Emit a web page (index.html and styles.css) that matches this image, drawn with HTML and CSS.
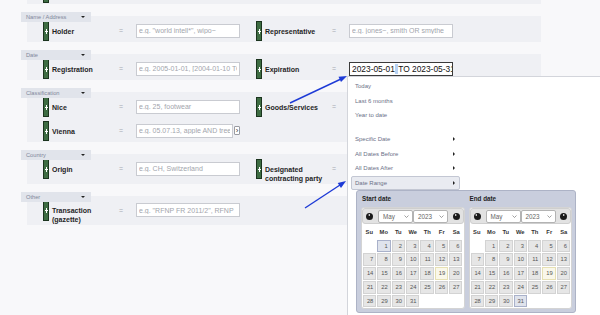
FILE: index.html
```html
<!DOCTYPE html>
<html lang="en">
<head>
    <meta charset="UTF-8">
    <title>Search form</title>
    <link rel="stylesheet" href="styles.css">
</head>
<body>
    <div class="form">
        <!-- previous row, scrolled off the top -->
        <div class="band band-top">
            <div class="row">
                <div class="field"><span class="grip"></span></div>
            </div>
        </div>

        <section class="group">
            <div class="legend">Name / Address<span class="caret"></span></div>
            <div class="band">
                <div class="row">
                    <div class="field">
                        <span class="grip"></span><span class="label">Holder</span><span class="eq">=</span>
                        <input class="box" type="text" placeholder='e.g. "world intell*", wipo~'>
                    </div>
                    <div class="field">
                        <span class="grip"></span><span class="label">Representative</span><span class="eq">=</span>
                        <input class="box" type="text" placeholder="e.g. jones~, smith OR smythe">
                    </div>
                </div>
            </div>
        </section>

        <section class="group">
            <div class="legend">Date<span class="caret"></span></div>
            <div class="band">
                <div class="row">
                    <div class="field">
                        <span class="grip"></span><span class="label">Registration</span><span class="eq">=</span>
                        <input class="box" type="text" placeholder="e.g. 2005-01-01, [2004-01-10 TO 2005-01-01]">
                    </div>
                    <div class="field">
                        <span class="grip"></span><span class="label">Expiration</span><span class="eq">=</span>
                        <div class="box box-focus">2023-05-01<span class="caret-sel"> </span>TO 2023-05-31</div>
                    </div>
                </div>
            </div>
        </section>

        <section class="group">
            <div class="legend">Classification<span class="caret"></span></div>
            <div class="band">
                <div class="row">
                    <div class="field">
                        <span class="grip"></span><span class="label">Nice</span><span class="eq">=</span>
                        <input class="box" type="text" placeholder="e.g. 25, footwear">
                    </div>
                    <div class="field">
                        <span class="grip"></span><span class="label">Goods/Services</span><span class="eq">=</span>
                        <input class="box" type="text" placeholder="">
                    </div>
                </div>
                <div class="row">
                    <div class="field">
                        <span class="grip"></span><span class="label">Vienna</span><span class="eq">=</span>
                        <div class="box-wrap">
                            <input class="box box-short" type="text" placeholder="e.g. 05.07.13, apple AND tree">
                            <button class="pick">&rsaquo;</button>
                        </div>
                    </div>
                </div>
            </div>
        </section>

        <section class="group">
            <div class="legend">Country<span class="caret"></span></div>
            <div class="band">
                <div class="row">
                    <div class="field">
                        <span class="grip"></span><span class="label">Origin</span><span class="eq">=</span>
                        <input class="box" type="text" placeholder="e.g. CH, Switzerland">
                    </div>
                    <div class="field">
                        <span class="grip"></span><span class="label">Designated contracting party</span><span class="eq">=</span>
                    </div>
                </div>
            </div>
        </section>

        <section class="group">
            <div class="legend">Other<span class="caret"></span></div>
            <div class="band">
                <div class="row">
                    <div class="field">
                        <span class="grip"></span><span class="label">Transaction (gazette)</span><span class="eq">=</span>
                        <input class="box" type="text" placeholder='e.g. "RFNP FR 2011/2", RFNP'>
                    </div>
                </div>
            </div>
        </section>
    </div>

    <!-- date menu opened under Expiration -->
    <div class="date-menu">
        <div class="menu-item">Today</div>
        <div class="menu-item">Last 6 months</div>
        <div class="menu-item">Year to date</div>
        <div class="menu-item menu-sep has-sub">Specific Date<span class="tri"></span></div>
        <div class="menu-item has-sub">All Dates Before<span class="tri"></span></div>
        <div class="menu-item has-sub">All Dates After<span class="tri"></span></div>
        <div class="menu-item has-sub active">Date Range<span class="tri"></span></div>

        <div class="range-panel">
            <div class="range-col">
                <div class="range-title">Start date</div>
                <div class="cal">
                    <div class="cal-head">
                        <span class="nav nav-prev"></span>
                        <span class="sel">May<svg width="5" height="3" viewBox="0 0 5 3"><path d="M0.5 0.5L2.5 2.5L4.5 0.5" fill="none" stroke="#777" stroke-width="0.7"/></svg></span>
                        <span class="sel">2023<svg width="5" height="3" viewBox="0 0 5 3"><path d="M0.5 0.5L2.5 2.5L4.5 0.5" fill="none" stroke="#777" stroke-width="0.7"/></svg></span>
                        <span class="nav nav-next"></span>
                    </div>
                    <div class="dow"><span>Su</span><span>Mo</span><span>Tu</span><span>We</span><span>Th</span><span>Fr</span><span>Sa</span></div>
                    <div class="days">
                        <span class="blank"></span><span class="picked">1</span><span>2</span><span>3</span><span>4</span><span>5</span><span>6</span>
                        <span>7</span><span>8</span><span>9</span><span>10</span><span>11</span><span>12</span><span>13</span>
                        <span>14</span><span>15</span><span>16</span><span>17</span><span>18</span><span class="today">19</span><span>20</span>
                        <span>21</span><span>22</span><span>23</span><span>24</span><span>25</span><span>26</span><span>27</span>
                        <span>28</span><span>29</span><span>30</span><span>31</span><span class="blank"></span><span class="blank"></span><span class="blank"></span>
                    </div>
                </div>
            </div>
            <div class="range-col">
                <div class="range-title">End date</div>
                <div class="cal">
                    <div class="cal-head">
                        <span class="nav nav-prev"></span>
                        <span class="sel">May<svg width="5" height="3" viewBox="0 0 5 3"><path d="M0.5 0.5L2.5 2.5L4.5 0.5" fill="none" stroke="#777" stroke-width="0.7"/></svg></span>
                        <span class="sel">2023<svg width="5" height="3" viewBox="0 0 5 3"><path d="M0.5 0.5L2.5 2.5L4.5 0.5" fill="none" stroke="#777" stroke-width="0.7"/></svg></span>
                        <span class="nav nav-next"></span>
                    </div>
                    <div class="dow"><span>Su</span><span>Mo</span><span>Tu</span><span>We</span><span>Th</span><span>Fr</span><span>Sa</span></div>
                    <div class="days">
                        <span class="blank"></span><span>1</span><span>2</span><span>3</span><span>4</span><span>5</span><span>6</span>
                        <span>7</span><span>8</span><span>9</span><span>10</span><span>11</span><span>12</span><span>13</span>
                        <span>14</span><span>15</span><span>16</span><span>17</span><span>18</span><span class="today">19</span><span>20</span>
                        <span>21</span><span>22</span><span>23</span><span>24</span><span>25</span><span>26</span><span>27</span>
                        <span>28</span><span>29</span><span>30</span><span class="picked">31</span><span class="blank"></span><span class="blank"></span><span class="blank"></span>
                    </div>
                </div>
            </div>
        </div>
    </div>

    <!-- annotation arrows -->
    <svg class="arrows" width="600" height="315" viewBox="0 0 600 315">
        <line x1="290" y1="103" x2="341" y2="79" stroke="#1d3ad6" stroke-width="1.4"/>
        <polygon points="347,76 341,82.1 338.5,76.7" fill="#1d3ad6"/>
        <line x1="305" y1="208" x2="340" y2="185" stroke="#1d3ad6" stroke-width="1.4"/>
        <polygon points="346,181 341,187.9 337.7,182.9" fill="#1d3ad6"/>
    </svg>
</body>
</html>
```

FILE: styles.css
```css
* {
    box-sizing: border-box;
}

body {
    margin: 0;
    width: 600px;
    height: 315px;
    overflow: hidden;
    position: relative;
    background: #f8f8fa;
    font-family: "Liberation Sans", Arial, sans-serif;
    color: #222;
}

.form {
    padding-left: 21px;
}

.group {
    margin-top: 8px;
}

.legend {
    position: relative;
    z-index: 1;
    width: 70px;
    height: 10px;
    padding: 0 6px 0 5px;
    display: flex;
    justify-content: space-between;
    align-items: center;
    background: #e1e4eb;
    color: #80869a;
    font-size: 5.7px;
    line-height: 10px;
}

.caret {
    width: 0;
    height: 0;
    border-left: 2px solid transparent;
    border-right: 2px solid transparent;
    border-top: 2.5px solid #222;
}

.band {
    margin-left: 6px;
    width: 514px;
    background: #eff0f4;
    padding: 5px 0 1px 16px;
    display: flex;
    flex-direction: column;
    gap: 4px;
}

.group .band {
    margin-top: -6px;
}

.band-top {
    margin-top: -22px;
}

.row {
    display: flex;
    gap: 16px;
    min-height: 20px;
}

.field {
    width: 197px;
    display: grid;
    grid-template-columns: 6px 70px 17px 104px;
    align-items: start;
}

.grip {
    position: relative;
    width: 6px;
    height: 20px;
    background: #3d6c42;
    border: 1px solid #1b341e;
}

.grip::before,
.grip::after {
    content: "";
    position: absolute;
    background: #fff;
}

.grip::before {
    left: 1.5px;
    top: 6.5px;
    width: 1px;
    height: 5px;
}

.grip::after {
    left: 0.5px;
    top: 8.5px;
    width: 3px;
    height: 1px;
}

.label {
    padding: 5.5px 0 0 3px;
    font-size: 7px;
    line-height: 9px;
    font-weight: bold;
    color: #1f1f1f;
}

.eq {
    font-size: 7px;
    line-height: 20px;
    color: #a6a9b1;
}

.box {
    width: 104px;
    height: 14px;
    margin-top: 2.5px;
    padding: 0 2px;
    background: #fff;
    border: 1px solid #c9cbd1;
    font-family: "Liberation Sans", Arial, sans-serif;
    font-size: 7px;
    color: #222;
    outline: none;
}

.box::placeholder {
    color: #a2a5ad;
}

.box-focus {
    border-color: #3a3a3a;
    padding: 0 2px;
    font-size: 8.4px;
    line-height: 12px;
    white-space: nowrap;
    overflow: hidden;
    color: #111;
}

.caret-sel {
    padding: 0 0.5px;
    background: #b9d3f3;
}

.box-wrap {
    display: flex;
    align-items: flex-start;
    gap: 1px;
}

.box-short {
    width: 103px;
}

.pick {
    width: 9px;
    height: 9px;
    margin-top: 4.5px;
    padding: 0;
    display: flex;
    align-items: center;
    justify-content: center;
    background: #fff;
    border: 1px solid #9a9ca3;
    border-radius: 1px;
    font-family: "Liberation Sans", Arial, sans-serif;
    font-size: 8px;
    line-height: 7px;
    color: #333;
}

/* date menu */

.date-menu {
    position: absolute;
    left: 347px;
    top: 76px;
    right: 0;
    height: 240px;
    padding: 2px 0 0 3px;
    background: #fff;
    border-top: 1px solid #d3d5db;
    border-left: 1px solid #d3d5db;
}

.menu-item {
    width: 109px;
    height: 14.5px;
    padding: 0 4px;
    display: flex;
    align-items: center;
    justify-content: space-between;
    font-size: 6px;
    color: #6b7188;
}

.menu-sep {
    margin-top: 9.5px;
}

.tri {
    width: 0;
    height: 0;
    border-top: 2px solid transparent;
    border-bottom: 2px solid transparent;
    border-left: 2.5px solid #222;
    margin-right: 1px;
}

.menu-item.active {
    background: #e9ebf1;
    border: 1px solid #c3c7d3;
    border-radius: 2px;
    padding: 0 3px;
}

.range-panel {
    width: 220px;
    margin-left: 5px;
    padding: 2px 3px 3px 4px;
    display: grid;
    grid-template-columns: 1fr 1fr;
    gap: 4px;
    background: #c9cedd;
    border: 1px solid #adb3c6;
    border-radius: 3px;
}

.range-title {
    height: 10px;
    padding-left: 1px;
    margin-bottom: 4px;
    font-size: 6.3px;
    line-height: 11px;
    font-weight: bold;
    color: #1e1e1e;
}

.cal {
    background: #fff;
    border: 1px solid #d4d4d4;
    border-radius: 3px;
    padding: 0 0 1px;
}

.cal-head {
    height: 16px;
    padding: 0 3px;
    display: flex;
    align-items: center;
    background: #e2e2e2;
    border: 1px solid #cfcfcf;
    border-radius: 3px;
}

.nav {
    position: relative;
    width: 7px;
    height: 7px;
    border-radius: 50%;
    background: #1a1a1a;
}

.nav::after {
    content: "";
    position: absolute;
    top: 1.8px;
    width: 0;
    height: 0;
    border-top: 1.7px solid transparent;
    border-bottom: 1.7px solid transparent;
}

.nav-prev::after {
    left: 1.6px;
    border-right: 2.6px solid #fff;
}

.nav-next {
    margin-left: auto;
}

.nav-next::after {
    left: 2.6px;
    border-left: 2.6px solid #fff;
}

.sel {
    width: 35px;
    height: 13px;
    padding: 0 3px 0 4px;
    display: flex;
    align-items: center;
    justify-content: space-between;
    background: #fff;
    border: 1px solid #b3b3b3;
    border-radius: 2px;
    font-size: 6.3px;
    color: #666;
}

.nav-prev + .sel {
    margin-left: 5px;
}

.dow {
    height: 13px;
    margin: 1px 0 1.5px;
    display: grid;
    grid-template-columns: repeat(7, 1fr);
    align-items: center;
    text-align: center;
    font-size: 5.8px;
    font-weight: bold;
    color: #333;
}

.days {
    display: grid;
    grid-template-columns: repeat(7, 1fr);
    grid-auto-rows: 12.75px;
    gap: 1px;
    padding: 0 1px;
}

.days span {
    padding-right: 2px;
    background: #e6e6e6;
    border: 1px solid #d3d3d3;
    text-align: right;
    font-size: 5.8px;
    line-height: 10.75px;
    color: #555;
}

.days .blank {
    background: transparent;
    border-color: transparent;
}

.days .picked {
    background: #dfe3ec;
    border-color: #a9b1ca;
}

.days .today {
    background: #f9f7ea;
    border-color: #e6e0b3;
}

.arrows {
    position: absolute;
    left: 0;
    top: 0;
    pointer-events: none;
}
```
